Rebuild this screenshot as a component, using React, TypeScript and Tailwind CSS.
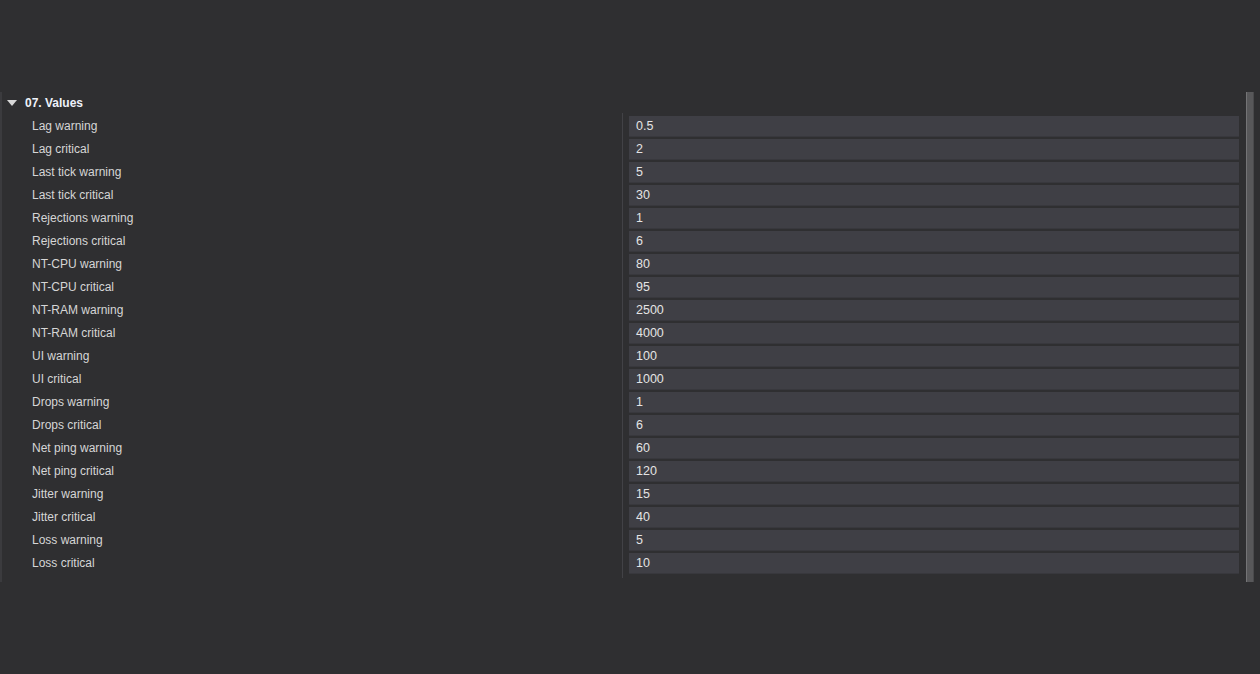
import React from 'react';

const ROWS: [string, string][] = [
  ['Lag warning', '0.5'],
  ['Lag critical', '2'],
  ['Last tick warning', '5'],
  ['Last tick critical', '30'],
  ['Rejections warning', '1'],
  ['Rejections critical', '6'],
  ['NT-CPU warning', '80'],
  ['NT-CPU critical', '95'],
  ['NT-RAM warning', '2500'],
  ['NT-RAM critical', '4000'],
  ['UI warning', '100'],
  ['UI critical', '1000'],
  ['Drops warning', '1'],
  ['Drops critical', '6'],
  ['Net ping warning', '60'],
  ['Net ping critical', '120'],
  ['Jitter warning', '15'],
  ['Jitter critical', '40'],
  ['Loss warning', '5'],
  ['Loss critical', '10'],
];

const App: React.FC = () => {
  return (
    <div
      className="w-[1260px] h-[674px] bg-[#2f2f31] pt-[92px] overflow-hidden"
      style={{ fontFamily: '"Liberation Sans", Arial, sans-serif' }}
    >
      <div className="flex h-[490px]">
        {/* property panel */}
        <div className="flex-1 border-l-2 border-[#3b3b3e] flex flex-col">
          <div className="h-[21px] flex items-center pl-[5px] gap-[8px] pt-[1px]">
            <svg width="10" height="6" viewBox="0 0 10 6">
              <path d="M0 0 L10 0 L5 6 Z" fill="#d8d8d8" />
            </svg>
            <span className="text-[12px] font-bold text-[#eef2fa] leading-none">07. Values</span>
          </div>
          <div className="flex">
            <div className="w-[621px] flex flex-col pt-[1px] border-r border-[#424246]">
              {ROWS.map(([label]) => (
                <div key={label} className="h-[23px] flex items-center pl-[30px] text-[12px] text-[#d6d6d6]">
                  {label}
                </div>
              ))}
              <div className="h-[4px]" />
            </div>
            <div className="flex-1 flex flex-col gap-[3px] pt-[3px] pl-[6px] pr-[7px]">
              {ROWS.map(([label, value]) => (
                <div
                  key={label}
                  className="h-[20px] bg-[#3f3f45] shadow-[0_1px_0_#38383d] flex items-center pl-[7px] pt-[1px] text-[12.5px] text-[#e4e4e4]"
                >
                  {value}
                </div>
              ))}
            </div>
          </div>
        </div>
        {/* scrollbar */}
        <div className="w-[14px] flex">
          <div className="w-[8px] h-full bg-[#58585a] border-l border-[#747476] border-r border-r-[#4a4a4c]" />
        </div>
      </div>
    </div>
  );
};

export default App;
